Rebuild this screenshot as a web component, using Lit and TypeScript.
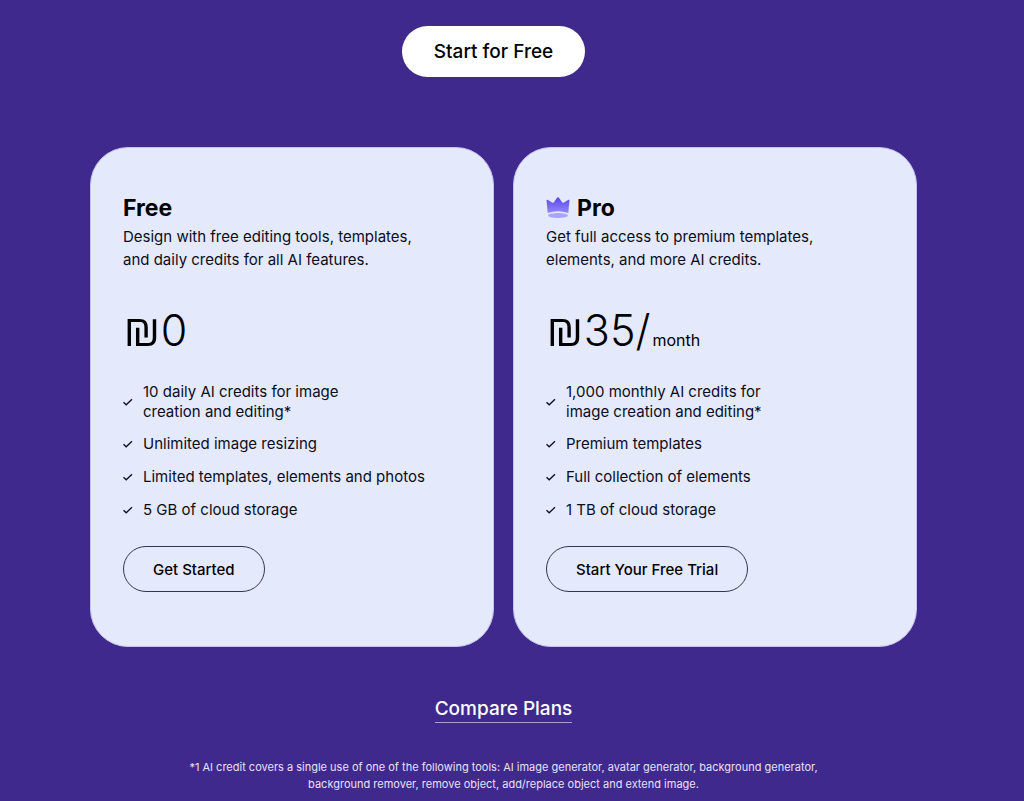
import { LitElement, html, css, svg, nothing } from "lit";
import { customElement, property } from "lit/decorators.js";

interface Plan {
  name: string;
  premium: boolean;
  description: string;
  price: string;
  period: string;
  features: string[];
  action: string;
}

const plans: Plan[] = [
  {
    name: "Free",
    premium: false,
    description: "Design with free editing tools, templates, and daily credits for all AI features.",
    price: "0",
    period: "",
    features: [
      "10 daily AI credits for image creation and editing*",
      "Unlimited image resizing",
      "Limited templates, elements and photos",
      "5 GB of cloud storage",
    ],
    action: "Get Started",
  },
  {
    name: "Pro",
    premium: true,
    description: "Get full access to premium templates, elements, and more AI credits.",
    price: "35/",
    period: "month",
    features: [
      "1,000 monthly AI credits for image creation and editing*",
      "Premium templates",
      "Full collection of elements",
      "1 TB of cloud storage",
    ],
    action: "Start Your Free Trial",
  },
];

const check = svg`<path d="M.5 5.2 3.2 7.8 9 2.2" fill="none" stroke="currentColor" stroke-width="1.3" />`;

const crown = html`<svg class="crown" viewBox="0 0 24 22" aria-hidden="true">
  <defs>
    <linearGradient id="crown-fill" x1="0" y1="0" x2="0" y2="1">
      <stop offset="0" stop-color="#5b45ee" />
      <stop offset="1" stop-color="#9488f4" />
    </linearGradient>
  </defs>
  <path
    d="M.6 3.8C.4 2.8 1.2 2.4 2 2.9L6 5.6Q7.2 6.2 8.1 5L11 .8Q12 -.4 13 .8L15.9 5Q16.8 6.2 18 5.6L22 2.9C22.8 2.4 23.6 2.8 23.4 3.8L22.3 16Q12 12.6 1.7 16Z"
    fill="url(#crown-fill)"
  />
  <ellipse cx="12" cy="18.5" rx="10" ry="2.6" fill="#aaa3f7" />
</svg>`;

@customElement("plan-card")
export class PlanCard extends LitElement {
  @property({ attribute: false }) plan!: Plan;

  static styles = css`
    :host {
      display: block;
      box-sizing: border-box;
      padding: 46px 32px 54px;
      border: 1px solid #c3c2ee;
      border-radius: 38px;
      background: #e4e9fc;
      color: #0b0d1c;
    }
    .title {
      display: flex;
      align-items: center;
      gap: 7px;
      margin: 0;
      color: #000;
      font-size: 23px;
      line-height: 28px;
      font-weight: 700;
    }
    .crown {
      width: 24px;
      height: 22px;
    }
    .description {
      max-width: 300px;
      margin: 3px 0 0;
      font-size: 15px;
      line-height: 23px;
    }
    .price {
      display: flex;
      align-items: baseline;
      gap: 2px;
      height: 52px;
      margin: 33px 0 0;
      color: #000;
      font-size: 43px;
      line-height: 52px;
      font-weight: 300;
    }
    .currency {
      font-size: 49px;
      line-height: 1;
    }
    .period {
      font-size: 16px;
      line-height: 20px;
      font-weight: 400;
    }
    .features {
      display: grid;
      gap: 11px;
      margin: 26px 0 0;
      padding: 0;
      list-style: none;
      font-size: 15px;
      line-height: 20px;
    }
    .feature {
      display: flex;
      align-items: center;
      gap: 10px;
      min-height: 22px;
    }
    .first {
      max-width: 240px;
    }
    .check {
      flex: none;
      width: 10px;
      height: 10px;
    }
    .action {
      height: 46px;
      margin: 25px 0 0;
      padding: 0 29px;
      border: 1px solid #34374b;
      border-radius: 23px;
      background: transparent;
      color: #000;
      font: inherit;
      font-size: 15px;
      font-weight: 500;
      cursor: pointer;
    }
  `;

  render() {
    const plan = this.plan;
    return html`
      <h2 class="title">${plan.premium ? crown : nothing}${plan.name}</h2>
      <p class="description">${plan.description}</p>
      <p class="price">
        <span><span class="currency">₪</span>${plan.price}</span>${plan.period
          ? html`<span class="period">${plan.period}</span>`
          : nothing}
      </p>
      <ul class="features">
        ${plan.features.map(
          (text, i) => html`<li class="feature ${i === 0 ? "first" : ""}">
            <svg class="check" viewBox="0 0 10 10" aria-hidden="true">${check}</svg>
            <span>${text}</span>
          </li>`
        )}
      </ul>
      <button class="action" type="button">${plan.action}</button>
    `;
  }
}

@customElement("app-root")
export class AppRoot extends LitElement {
  static styles = css`
    :host {
      display: block;
      box-sizing: border-box;
      min-height: 100vh;
      padding: 26px 17px 8px 0;
      background: #3f298c;
      font-family: Inter, "Open Sans", sans-serif;
    }
    .page {
      display: flex;
      flex-direction: column;
      align-items: center;
    }
    .start {
      height: 51px;
      margin-right: 20px;
      padding: 0 32px;
      border: 0;
      border-radius: 26px;
      background: #fff;
      color: #000;
      font: inherit;
      font-size: 19px;
      font-weight: 500;
      cursor: pointer;
    }
    .plans {
      display: grid;
      grid-template-columns: repeat(auto-fit, minmax(320px, 1fr));
      gap: 19px;
      box-sizing: border-box;
      width: 100%;
      max-width: 827px;
      margin-top: 70px;
    }
    .compare {
      margin-top: 48px;
      border-bottom: 1px solid #a99bd6;
      color: #fff;
      font-size: 19px;
      line-height: 27px;
      font-weight: 500;
      text-decoration: none;
    }
    .note {
      max-width: 660px;
      margin: 36px 0 0;
      color: #e6e0fa;
      font-size: 11px;
      line-height: 17px;
      text-align: center;
    }
  `;

  render() {
    return html`
      <main class="page">
        <button class="start" type="button">Start for Free</button>
        <section class="plans" aria-label="Plans">
          ${plans.map((plan) => html`<plan-card .plan=${plan}></plan-card>`)}
        </section>
        <a class="compare" href="#compare">Compare Plans</a>
        <p class="note">
          *1 AI credit covers a single use of one of the following tools: AI image generator, avatar generator,
          background generator, background remover, remove object, add/replace object and extend image.
        </p>
      </main>
    `;
  }
}
